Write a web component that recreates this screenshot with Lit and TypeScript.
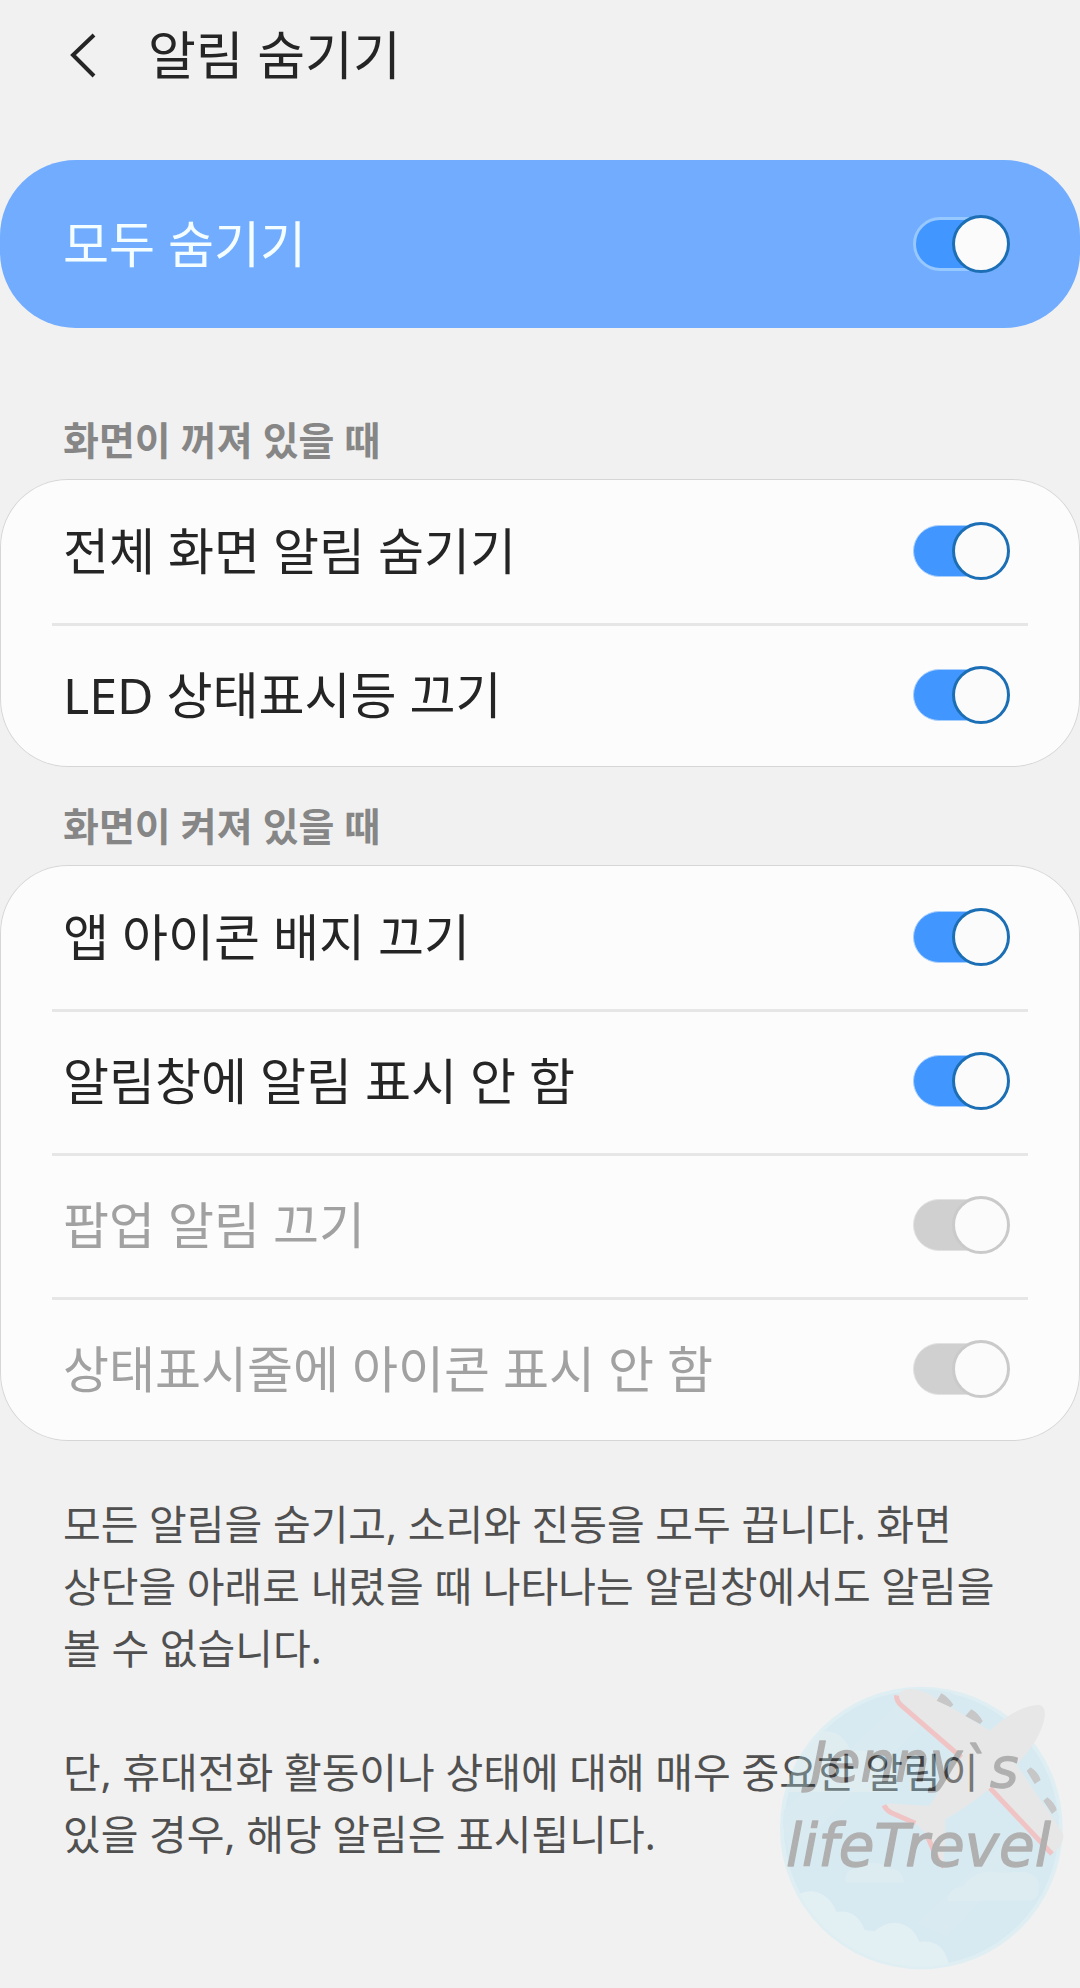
import { LitElement, html, css } from "lit";
import { customElement, property, state } from "lit/decorators.js";

interface Setting {
  id: string;
  label: string;
  on: boolean;
  disabled?: boolean;
}

interface Section {
  title: string;
  items: Setting[];
}

@customElement("setting-row")
class SettingRow extends LitElement {
  @property() label = "";
  @property({ type: Boolean }) on = false;
  @property({ type: Boolean, reflect: true }) disabled = false;
  @property({ type: Boolean, reflect: true }) primary = false;

  static styles = css`
    :host {
      display: block;
      color: #252525;
    }
    :host([primary]) {
      color: #f4fdff;
    }
    :host([disabled]) {
      color: #a1a1a1;
    }
    .row {
      display: flex;
      align-items: center;
      justify-content: space-between;
      gap: 24px;
      min-height: 144px;
      padding: 0 70px 0 63px;
      box-sizing: border-box;
      font-size: 50px;
      line-height: 72px;
    }
    :host([primary]) .row {
      min-height: 168px;
    }
    .switch {
      appearance: none;
      flex: none;
      display: grid;
      align-items: center;
      width: 97px;
      height: 58px;
      margin: 0;
    }
    .switch::before,
    .switch::after {
      content: "";
      grid-area: 1 / 1;
      box-sizing: border-box;
      border-radius: 29px;
    }
    .switch::before {
      height: 52px;
      margin: 0 2px 0 0;
      background: #4296ff;
      border: 1px solid #a9d0fb;
    }
    .switch::after {
      width: 58px;
      height: 58px;
      background: #fbfbfb;
      border: 3px solid #1c6fb5;
    }
    .switch:checked::after {
      justify-self: end;
    }
    :host([primary]) .switch::before {
      height: 54px;
      border: 3px solid #97c8ff;
    }
    .switch:disabled::before {
      background: #d0d0d0;
      border-color: #e2e2e2;
    }
    .switch:disabled::after {
      border-color: #cacaca;
    }
  `;

  private onChange(e: Event) {
    this.on = (e.target as HTMLInputElement).checked;
    this.dispatchEvent(new CustomEvent("toggle", { detail: this.on }));
  }

  render() {
    return html`
      <label class="row">
        <span>${this.label}</span>
        <input
          class="switch"
          type="checkbox"
          .checked=${this.on}
          ?disabled=${this.disabled}
          @change=${this.onChange}
        />
      </label>
    `;
  }
}

@customElement("travel-mark")
class TravelMark extends LitElement {
  static styles = css`
    :host {
      display: block;
    }
    svg {
      display: block;
      width: 100%;
      height: auto;
    }
    .name {
      font-family: "DejaVu Sans", sans-serif;
      font-style: italic;
      fill: #1c1c1c;
      stroke: #1c1c1c;
      stroke-width: 4;
      stroke-linejoin: round;
    }
  `;

  render() {
    return html`
      <svg viewBox="0 0 960 954" aria-hidden="true">
        <defs>
          <clipPath id="disc"><circle cx="484" cy="474" r="416" /></clipPath>
        </defs>
        <g opacity="0.3">
          <circle cx="484" cy="474" r="424" fill="#b4eaf5" />
          <circle cx="484" cy="474" r="412" fill="#9edaf1" />
          <g clip-path="url(#disc)">
            <path d="M60 430 L470 50 H600 L90 560Z M470 760 L860 400 L900 440 L560 800Z" fill="#a5def2" />
            <path
              d="M70 366 V300 Q100 262 134 258 Q146 184 200 184 Q252 186 272 246 Q330 230 352 272 Q400 280 410 320 V366Z"
              fill="#b6e6f2"
            />
            <path
              d="M90 690 Q150 640 205 686 Q222 704 230 726 Q290 716 314 780 L344 784 Q370 758 406 758 Q460 764 478 816 Q550 806 566 882 L500 920 H100Z"
              fill="#c6eef8"
            />
            <path d="M256 638 V618 Q262 596 290 596 Q340 560 390 596 Q430 596 432 638Z" fill="#b0e3f1" />
            <path d="M562 692 Q566 650 610 650 Q650 590 730 610 Q836 590 838 650 Q838 690 806 692Z" fill="#b0e3f1" />
          </g>
          <path
            d="M412 78 Q430 50 470 60 Q500 66 520 80 L690 182 Q770 108 836 104 Q858 108 854 140 Q844 206 770 284 L908 488 Q918 520 880 548 L692 354 Q620 412 556 448 V520 Q552 560 548 588 L498 490 L466 460 L372 408 Q380 398 410 402 L508 408 L600 262 L412 82Z"
            fill="#d3d3d3"
          />
          <path
            d="M410 76 Q408 92 424 106 L604 262 M690 354 L876 552 M372 406 Q378 420 394 428 L466 460 M498 490 L530 562 Q538 582 552 590"
            fill="none"
            stroke="#f0605f"
            stroke-width="15"
          />
          <path
            d="M530 92 L544 70 Q562 78 580 104 L572 112Z M616 138 L634 118 Q656 130 668 154 L660 162Z M800 302 L812 292 Q836 308 842 330 L824 342Z M850 392 L862 382 Q886 400 890 420 L876 432Z"
            fill="#686868"
          />
          <text class="name" x="152" y="332" font-size="164">Jenny</text>
          <text class="name" x="600" y="352" font-size="164">\`</text>
          <text class="name" x="690" y="350" font-size="164">s</text>
          <text class="name" x="78" y="588" font-size="174">lifeTrevel</text>
        </g>
      </svg>
    `;
  }
}

@customElement("app-root")
class AppRoot extends LitElement {
  @state() private allHidden = true;

  private sections: Section[] = [
    {
      title: "화면이 꺼져 있을 때",
      items: [
        { id: "fullscreen", label: "전체 화면 알림 숨기기", on: true },
        { id: "led", label: "LED 상태표시등 끄기", on: true },
      ],
    },
    {
      title: "화면이 켜져 있을 때",
      items: [
        { id: "badge", label: "앱 아이콘 배지 끄기", on: true },
        { id: "panel", label: "알림창에 알림 표시 안 함", on: true },
        { id: "popup", label: "팝업 알림 끄기", on: true, disabled: true },
        { id: "status", label: "상태표시줄에 아이콘 표시 안 함", on: true, disabled: true },
      ],
    },
  ];

  static styles = css`
    :host {
      display: block;
      font-family: "Noto Sans", "Noto Sans CJK KR", sans-serif;
    }
    .page {
      position: relative;
      min-height: 100vh;
      background: #f1f1f1;
    }
    .header {
      display: flex;
      align-items: center;
      gap: 44px;
      min-height: 110px;
      margin-bottom: 50px;
      padding: 0 63px;
    }
    .back {
      display: flex;
      padding: 0;
      border: 0;
      background: none;
    }
    .title {
      margin: 0;
      font-size: 52px;
      font-weight: 400;
      line-height: 72px;
      color: #252525;
    }
    .master {
      margin-bottom: 53px;
      border-radius: 76px;
      background: #71acfe;
    }
    .heading {
      margin: 0;
      padding: 29px 63px 9px;
      font-size: 39px;
      font-weight: 700;
      line-height: 60px;
      color: #868686;
    }
    .card {
      border-radius: 68px;
      background: #fcfcfc;
      box-shadow: inset 0 0 0 1px #d6d6d6;
    }
    .item + .item {
      background: linear-gradient(#e6e6e6, #e6e6e6) 52px 0 / calc(100% - 104px) 3px no-repeat;
    }
    .notes {
      padding: 52px 63px 0;
      font-size: 41px;
      line-height: 62px;
      word-break: keep-all;
      color: #505050;
    }
    .note {
      margin: 0 0 62px;
    }
    .mark {
      position: absolute;
      right: 0;
      bottom: 0;
      width: 320px;
      pointer-events: none;
    }
  `;

  render() {
    return html`
      <main class="page">
        <header class="header">
          <button class="back" type="button" aria-label="뒤로">
            <svg width="41" height="48" viewBox="0 0 41 48" fill="none" stroke="#252525" stroke-width="4">
              <path d="M31 4 L10 24 L31 45" />
            </svg>
          </button>
          <h1 class="title">알림 숨기기</h1>
        </header>

        <div class="master">
          <setting-row
            primary
            label="모두 숨기기"
            .on=${this.allHidden}
            @toggle=${(e: CustomEvent<boolean>) => (this.allHidden = e.detail)}
          ></setting-row>
        </div>

        ${this.sections.map(
          (section) => html`
            <section>
              <h2 class="heading">${section.title}</h2>
              <div class="card">
                ${section.items.map(
                  (item) => html`
                    <div class="item">
                      <setting-row
                        id=${item.id}
                        label=${item.label}
                        .on=${item.on}
                        ?disabled=${item.disabled}
                      ></setting-row>
                    </div>
                  `
                )}
              </div>
            </section>
          `
        )}

        <div class="notes">
          <p class="note">
            모든 알림을 숨기고, 소리와 진동을 모두 끕니다. 화면 상단을 아래로 내렸을 때 나타나는 알림창에서도 알림을 볼 수
            없습니다.
          </p>
          <p class="note">단, 휴대전화 활동이나 상태에 대해 매우 중요한 알림이 있을 경우, 해당 알림은 표시됩니다.</p>
        </div>

        <travel-mark class="mark"></travel-mark>
      </main>
    `;
  }
}
